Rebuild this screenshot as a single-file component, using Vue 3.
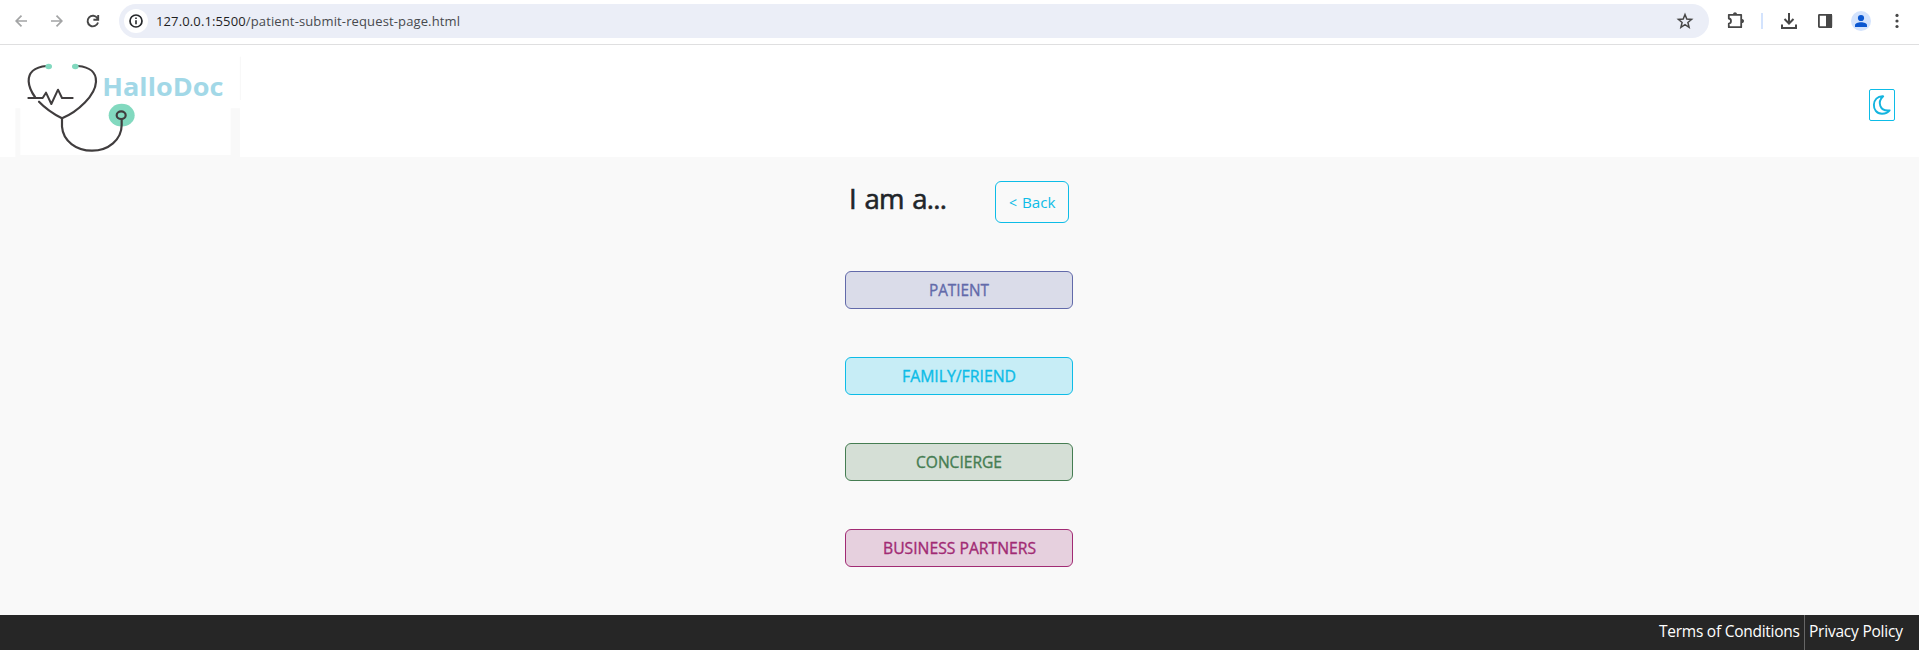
<script setup>
const roles = [
  { label: 'PATIENT', kind: 'patient', width: 60 },
  { label: 'FAMILY/FRIEND', kind: 'family', width: 114 },
  { label: 'CONCIERGE', kind: 'concierge', width: 86 },
  { label: 'BUSINESS PARTNERS', kind: 'business', width: 153 }
]
</script>

<template>
  <div class="page">
    <div class="toolbar">
      <svg class="nav" width="117" height="44" viewBox="0 0 117 44" fill="none">
        <g stroke="#a3a4a5" stroke-width="1.7">
          <path d="M27 21H16.5M21.5 15.7L16.2 21l5.3 5.3" />
          <path d="M51 21h10.5M56.5 15.7L61.8 21l-5.3 5.3" />
        </g>
        <path d="M97.4 18.2A5.3 5.3 0 1 0 98 22.5M98.2 15v4.7h-4.8" stroke="#474747" stroke-width="1.9" />
      </svg>
      <div class="address">
        <span class="info">
          <svg width="16" height="16" viewBox="0 0 16 16" fill="none">
            <circle cx="8" cy="8" r="6" stroke="#26282b" stroke-width="1.7" />
            <path d="M8 7.3v4M8 4.4v1.5" stroke="#26282b" stroke-width="1.6" />
          </svg>
        </span>
        <svg class="url" width="310" height="24"><text x="0" y="17" textLength="304"><tspan class="host">127.0.0.1:5500</tspan>/patient-submit-request-page.html</text></svg>
        <svg class="star" width="18" height="18" viewBox="0 0 18 18" fill="none" stroke="#474747" stroke-width="1.5">
          <path d="M9 2.5l1.8 4.5 4.8.4-3.7 3.1 1.2 4.8L9 12.7l-4.1 2.6 1.2-4.8-3.7-3.1L7.2 7z" />
        </svg>
      </div>
      <svg class="tools" width="210" height="44" viewBox="1709 0 210 44" fill="none">
        <path d="M1728.800 14.800h12.400v12.400h-12.400v-3.600c2.900-.3 2.900-4.800 0-5.100z" stroke="#474747" stroke-width="1.800" stroke-linejoin="round" />
        <path d="M1733 14.200c0-2.700 4-2.700 4 0zM1742 18.900c2.700 0 2.700 4.200 0 4.200z" fill="#474747" />
        <path d="M1762 13v16" stroke="#d3e3fd" stroke-width="2" />
        <path d="M1789 13v10M1784.5 19l4.5 4.5 4.5-4.5M1782 24.5v3.6h14v-3.6" stroke="#474747" stroke-width="2" />
        <rect x="1818.9" y="14.9" width="12.4" height="12.2" rx=".5" stroke="#474747" stroke-width="1.8" />
        <path d="M1826 14h6v14h-6z" fill="#474747" />
        <circle cx="1861" cy="21" r="10" fill="#d3e3fd" />
        <circle cx="1861" cy="18" r="3.1" fill="#0b57d0" />
        <path d="M1855 27v-1.8c0-3.9 12-3.9 12 0V27z" fill="#0b57d0" />
        <g fill="#474747"><circle cx="1897" cy="15.4" r="1.6" /><circle cx="1897" cy="21" r="1.6" /><circle cx="1897" cy="26.5" r="1.6" /></g>
      </svg>
    </div>

    <header>
      <svg class="logo" width="250" height="112" viewBox="0 3 750 336" fill="none">
        <path d="M46 193h15v140h631V193h28v146H46z" fill="#f9f9f9" />
        <path d="M721 38v130" stroke="#f7f7f7" stroke-width="3" />
        <ellipse cx="365" cy="213.500" rx="39" ry="34" fill="#82d9bf" />
        <g stroke="#403d3e" stroke-width="6.500" stroke-linecap="round" stroke-linejoin="round">
          <path d="M140 66C101 69 85 88 86 112C87 130 95 145 105 159" />
          <path d="M234 66C270 69 289 86 288 113C286 154 235 202 186 223C163 211 137 194 117 173" />
          <path d="M186 223v25C189 291 229 320 276 320C325 320 365 287 365 243v-17" />
          <ellipse cx="363.500" cy="213.500" rx="13.500" ry="11.500" />
          <path d="M85 162h43l10-16 16 34 20-43 12 25h32" stroke-width="6" />
        </g>
        <g fill="#82d9bf"><ellipse cx="146" cy="67.500" rx="10" ry="8" /><ellipse cx="226" cy="67.500" rx="10" ry="8" /></g>
        <text x="307" y="155" textLength="363" lengthAdjust="spacingAndGlyphs" class="brand">HalloDoc</text>
      </svg>
      <button class="theme" aria-label="Dark mode">
        <svg width="18" height="20" viewBox="0 0 18 20" fill="none" stroke="#14b4df" stroke-width="1.900" stroke-linejoin="round">
          <path d="M10.200 1.300C-1.800 .5-2.200 18.700 9 18.700c3 0 6-1 7.600-3.300C6.500 16.500 4 7 10.200 1.300z" />
        </svg>
      </button>
    </header>

    <main>
      <div class="heading">
        <h1><svg width="110" height="40"><text x="0" y="28" textLength="98">I am a...</text></svg></h1>
        <button class="back"><svg width="48" height="24"><text x="1" y="18"><tspan class="arrow">&lt; </tspan><tspan x="14" textLength="33.500" lengthAdjust="spacingAndGlyphs">Back</tspan></text></svg></button>
      </div>
      <button v-for="role in roles" :key="role.kind" class="role" :class="role.kind">
        <svg :width="role.width" height="24"><text x="0" y="18" :textLength="role.width" lengthAdjust="spacingAndGlyphs">{{ role.label }}</text></svg>
      </button>
    </main>

    <footer>
      <a class="terms"><svg width="142" height="35"><text x="0" y="22" textLength="141">Terms of Conditions</text></svg></a>
      <a class="privacy"><svg width="95" height="35"><text x="0" y="22" textLength="94">Privacy Policy</text></svg></a>
    </footer>
  </div>
</template>

<style>
body { margin: 0; background: #fff; overflow: hidden; }
</style>

<style scoped>
.page { width: 100%; height: 652px; font-family: "Open Sans", "Noto Sans", sans-serif; background: #fff; }
svg { display: block; flex: none; overflow: visible; }
button { box-sizing: border-box; padding: 0; font-family: inherit; background: none; }
text { fill: currentColor; }
.toolbar { display: flex; height: 44px; border-bottom: 1px solid #dfdfe0; }
.address { display: flex; align-items: center; box-sizing: border-box; flex: 1; height: 34px; margin-top: 4px; margin-left: 2px; padding: 0 15px 0 5px; border-radius: 17px; background: #ebeef7; }
.info { display: grid; place-items: center; width: 24px; height: 24px; border-radius: 50%; background: #fff; }
.url { margin-left: 8px; font-size: 13px; color: #474a4e; }
.host { fill: #1f1f1f; }
.star { margin-left: auto; }
header { display: flex; justify-content: space-between; align-items: center; height: 112px; padding-right: 24px; }
.brand { font: 700 75px "Open Sans", sans-serif; fill: #a2d8e7; }
.theme { display: grid; place-items: center; width: 26px; height: 32px; margin-top: 8px; border: 1px solid #0dbce7; border-radius: 2px; }
main { box-sizing: border-box; display: flex; flex-direction: column; align-items: center; gap: 48px; height: 458px; padding: 24px 1px 0 0; background: #f9f9f9; }
.heading { display: flex; justify-content: space-between; width: 220px; height: 42px; }
h1 { margin: 0; font-size: 27.500px; font-weight: 400; word-spacing: 2px; color: #212529; }
h1 text { stroke: currentColor; stroke-width: .6px; }
.back { display: grid; place-items: center; width: 74px; height: 42px; border: 1px solid #0dbce7; border-radius: 6px; color: #0dbce7; font-size: 15px; }
.arrow { font-size: 14px; }
.role { display: grid; place-items: center; width: 228px; height: 38px; border: 1px solid currentColor; border-radius: 6px; font-size: 15.500px; }
.role text { stroke: currentColor; stroke-width: .35px; }
.patient { color: #626aaa; background: #dadce9; }
.family { color: #0dbce7; background: #c7edf6; }
.concierge { color: #457d52; background: #d5dfd6; }
.business { color: #a12b74; background: #e6d0de; }
footer { display: flex; justify-content: flex-end; height: 35px; padding-right: 15px; background: #262626; color: #fff; font-size: 15.500px; }
.terms { padding-right: 3px; border-right: 1px solid #666; }
.privacy { padding-left: 4px; }
</style>
